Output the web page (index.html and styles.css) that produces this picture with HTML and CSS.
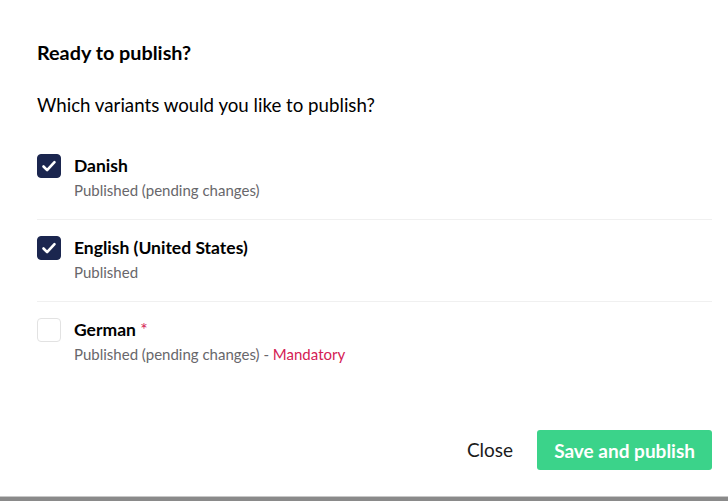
FILE: index.html
```html
<!DOCTYPE html>
<html>
<head>
<meta charset="utf-8">
<link rel="stylesheet" href="styles.css">
</head>
<body>
<div class="dialog">
  <h1 class="title">Ready to publish?</h1>
  <p class="intro">Which variants would you like to publish?</p>
  <ul class="variants">
    <li class="variant">
      <span class="check checked"><svg viewBox="0 0 24 24" width="24" height="24"><path d="M6.5 12.5l3.6 3.6 7.4-8" fill="none" stroke="#fff" stroke-width="2.6" stroke-linecap="round" stroke-linejoin="round"/></svg></span>
      <div class="info">
        <div class="name">Danish</div>
        <div class="state">Published (pending changes)</div>
      </div>
    </li>
    <li class="variant">
      <span class="check checked"><svg viewBox="0 0 24 24" width="24" height="24"><path d="M6.5 12.5l3.6 3.6 7.4-8" fill="none" stroke="#fff" stroke-width="2.6" stroke-linecap="round" stroke-linejoin="round"/></svg></span>
      <div class="info">
        <div class="name">English (United States)</div>
        <div class="state">Published</div>
      </div>
    </li>
    <li class="variant last">
      <span class="check"></span>
      <div class="info">
        <div class="name">German <span class="req">*</span></div>
        <div class="state">Published (pending changes) - <span class="mandatory">Mandatory</span></div>
      </div>
    </li>
  </ul>
  <div class="actions">
    <button class="btn-close">Close</button>
    <button class="btn-publish">Save and publish</button>
  </div>
</div>
<div class="bottom-edge"></div>
</body>
</html>
```
FILE: styles.css
```css
html, body {
  margin: 0;
  padding: 0;
  background: #fff;
}
body {
  font-family: Lato, "Open Sans", sans-serif;
  color: #000;
  width: 728px;
  height: 501px;
  display: flex;
  flex-direction: column;
  overflow: hidden;
}
.dialog {
  flex: 1;
  padding: 41px 16px 0 37px;
  display: flex;
  flex-direction: column;
}
.title {
  margin: 0;
  font-size: 19.8px;
  font-weight: 700;
  line-height: 22px;
}
.intro {
  margin: 31px 0 0;
  font-size: 18.7px;
  line-height: 22px;
  font-weight: 400;
}
.variants {
  list-style: none;
  margin: 22px 0 0;
  padding: 0;
}
.variant {
  display: flex;
  gap: 13px;
  padding: 16px 0 17px;
  border-bottom: 1px solid #f0f0f0;
}
.variant.last {
  border-bottom: none;
}
.check {
  width: 24px;
  height: 24px;
  box-sizing: border-box;
  border-radius: 4px;
  border: 1px solid #e2e2e2;
  background: #fff;
  flex: none;
  display: flex;
}
.check.checked {
  background: #1b264f;
  border-color: #1b264f;
}
.check svg {
  margin: -1px;
}
.name {
  font-size: 17.5px;
  font-weight: 700;
  line-height: 24px;
}
.req {
  color: #d42054;
  font-weight: 400;
}
.state {
  font-size: 15px;
  line-height: 24px;
  color: #68676b;
}
.mandatory {
  color: #d42054;
}
.actions {
  margin-top: auto;
  margin-bottom: 26px;
  display: flex;
  justify-content: flex-end;
  align-items: center;
  gap: 0;
}
.btn-close {
  font-family: inherit;
  font-size: 19px;
  color: #1b1b1b;
  background: none;
  border: none;
  padding: 0 24px 0 0;
  line-height: 40px;
}
.btn-publish {
  font-family: inherit;
  font-size: 19px;
  font-weight: 700;
  color: #fff;
  background: #3bd38a;
  border: none;
  border-radius: 3px;
  height: 40px;
  padding: 0 17px;
}
.bottom-edge {
  height: 4px;
  border-top: 1px solid #c8c8c8;
  background: #8a8a8a;
  flex: none;
}
```
